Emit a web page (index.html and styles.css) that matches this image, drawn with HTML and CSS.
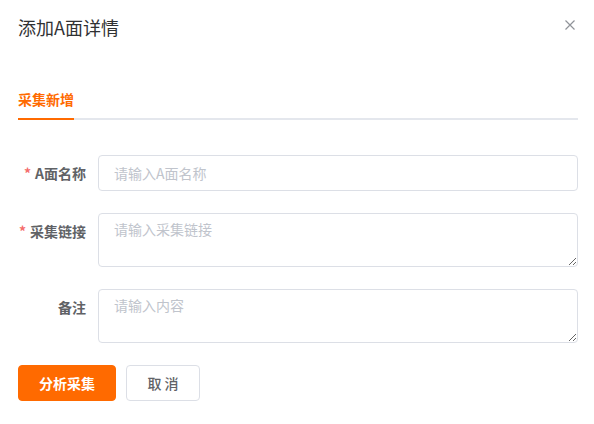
FILE: index.html
```html
<!DOCTYPE html>
<html lang="zh-CN">
<head>
<meta charset="utf-8">
<title>添加A面详情</title>
<link rel="stylesheet" href="styles.css">
</head>
<body>
<div class="dialog">
  <div class="dialog-header">
    <span class="dialog-title">添加A面详情</span>
    <button class="dialog-close" aria-label="关闭">
      <svg width="10" height="10" viewBox="0 0 10 10"><path d="M0.5 0.5 L9.5 9.5 M9.5 0.5 L0.5 9.5" stroke="#909399" stroke-width="1.2" fill="none"/></svg>
    </button>
  </div>
  <div class="dialog-body">
    <div class="tabs">
      <div class="tab active">采集新增</div>
    </div>
    <form class="form">
      <div class="form-item">
        <label class="form-label"><span class="req">*</span>A面名称</label>
        <div class="form-content"><input class="input" type="text" placeholder="请输入A面名称"></div>
      </div>
      <div class="form-item">
        <label class="form-label"><span class="req">*</span>采集链接</label>
        <div class="form-content"><textarea class="textarea" placeholder="请输入采集链接"></textarea></div>
      </div>
      <div class="form-item">
        <label class="form-label">备注</label>
        <div class="form-content"><textarea class="textarea" placeholder="请输入内容"></textarea></div>
      </div>
      <div class="actions">
        <button type="button" class="btn btn-primary">分析采集</button>
        <button type="button" class="btn btn-default">取 消</button>
      </div>
    </form>
  </div>
</div>
</body>
</html>
```
FILE: styles.css
```css
* { box-sizing: border-box; }
html, body {
  margin: 0;
  padding: 0;
  background: #fff;
  font-family: "Noto Sans CJK SC", "Noto Sans", "Liberation Sans", sans-serif;
  font-size: 14px;
  color: #606266;
}
.dialog {
  width: 594px;
  padding: 0 16px 0 18px;
}
.dialog-header {
  display: flex;
  align-items: center;
  justify-content: space-between;
  padding-top: 15px;
  height: 39px;
}
.dialog-title {
  font-size: 18px;
  line-height: 24px;
  color: #303133;
}
.dialog-close {
  border: 0;
  background: none;
  padding: 0;
  margin: -4px 3px 0 0;
  width: 10px;
  height: 10px;
  display: flex;
  cursor: pointer;
}
.dialog-body {
  padding-top: 41px;
}
.tabs {
  display: flex;
  border-bottom: 2px solid #e4e7ed;
  height: 40px;
  margin-bottom: 35px;
}
.tab {
  height: 40px;
  line-height: 40px;
  font-size: 14px;
  font-weight: 700;
  color: #303133;
  position: relative;
}
.tab.active {
  color: #ff6a00;
  border-bottom: 2px solid #ff6a00;
  margin-bottom: -2px;
  height: 40px;
  line-height: 38px;
}
.form-item {
  display: flex;
  margin-bottom: 22px;
}
.form-label {
  width: 80px;
  flex: none;
  text-align: right;
  padding-right: 12px;
  line-height: 36px;
  font-weight: 700;
  color: #606266;
  font-size: 14px;
}
.req {
  color: #f56c6c;
  margin-right: 4px;
}
.form-content {
  flex: 1;
  display: flex;
}
.input, .textarea {
  width: 100%;
  border: 1px solid #dcdfe6;
  border-radius: 4px;
  font-family: inherit;
  font-size: 14px;
  color: #606266;
  background: #fff;
  outline: none;
}
.input {
  height: 36px;
  padding: 0 15px;
}
.textarea {
  height: 54px;
  padding: 5px 15px;
  line-height: 1.5;
  resize: vertical;
  display: block;
}
.input::placeholder, .textarea::placeholder {
  color: #c0c4cc;
}
.actions {
  display: flex;
  gap: 10px;
}
.btn {
  height: 36px;
  border-radius: 4px;
  font-family: inherit;
  font-size: 14px;
  font-weight: 700;
  cursor: pointer;
}
.btn-primary {
  width: 98px;
  background: #ff6a00;
  border: 1px solid #ff6a00;
  color: #fff;
}
.btn-default {
  width: 74px;
  background: #fff;
  border: 1px solid #dcdfe6;
  color: #606266;
  font-weight: 500;
}
```
